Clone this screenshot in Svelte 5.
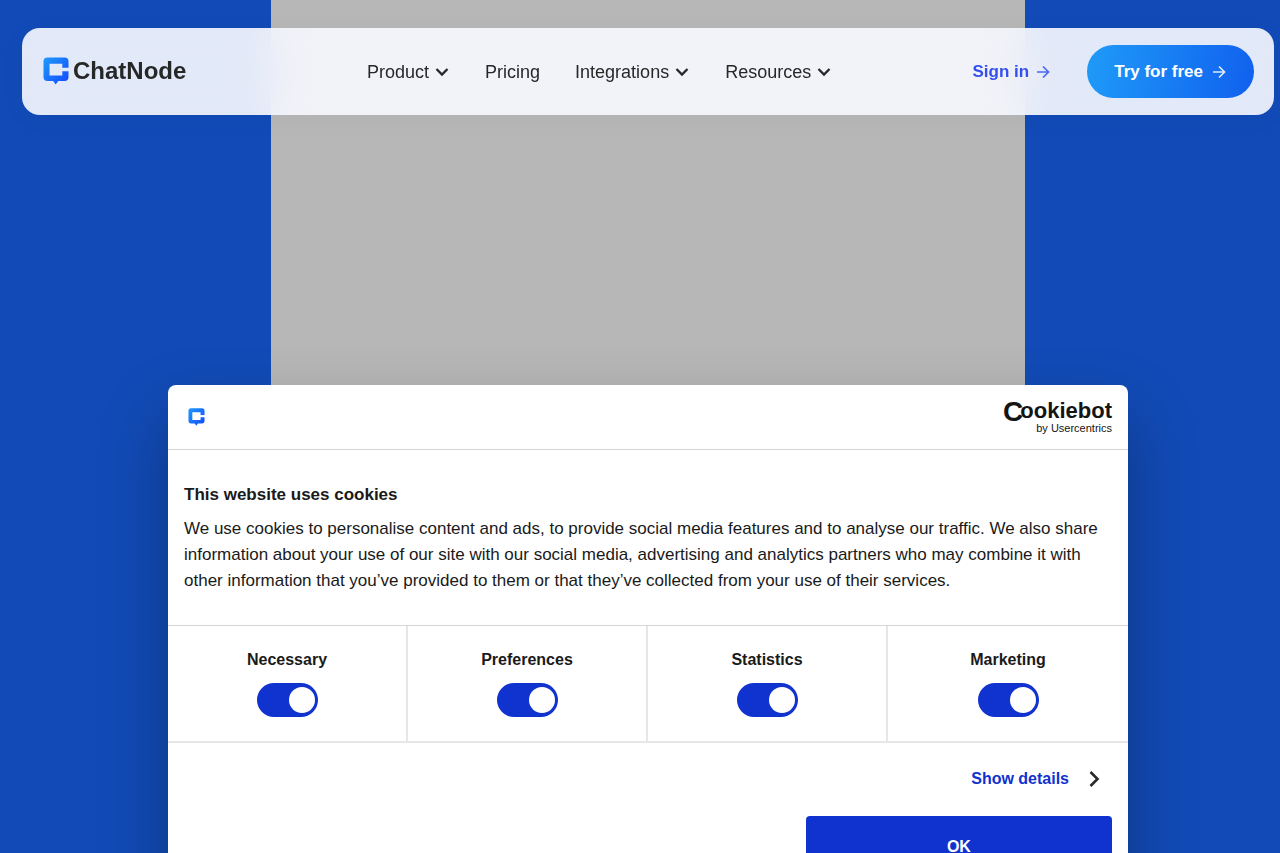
<script lang="ts">
  /**
   * Landing page header with the cookie consent dialog
   */

  interface NavItem {
    label: string;
    menu: boolean;
  }

  interface Category {
    id: string;
    label: string;
    enabled: boolean;
  }

  const navItems: NavItem[] = [
    { label: 'Product', menu: true },
    { label: 'Pricing', menu: false },
    { label: 'Integrations', menu: true },
    { label: 'Resources', menu: true }
  ];

  let categories: Category[] = $state([
    { id: 'necessary', label: 'Necessary', enabled: true },
    { id: 'preferences', label: 'Preferences', enabled: true },
    { id: 'statistics', label: 'Statistics', enabled: true },
    { id: 'marketing', label: 'Marketing', enabled: true }
  ]);
</script>

{#snippet mark(id: string)}
  <svg class="mark" viewBox="0 0 26 28" aria-hidden="true">
    <defs>
      <linearGradient id={id} x1="0" y1="0" x2="1" y2="1">
        <stop offset="0" stop-color="#1f9bfb" />
        <stop offset="1" stop-color="#1248fb" />
      </linearGradient>
    </defs>
    <path
      fill="url(#{id})"
      d="M4.500 0.500H21.500Q25.500 0.500 25.500 4.500V10.800H19.300V6.800H6.500V18.500H19.300V14.200H25.500V20Q25.500 24 21.500 24H15.200L12.700 27.500L10.200 24H4.500Q0.500 24 0.500 20V4.500Q0.500 0.500 4.500 0.500Z"
    />
  </svg>
{/snippet}

{#snippet arrow()}
  <svg class="icon" viewBox="0 0 16 16" aria-hidden="true">
    <path d="M2 8H13.500M8 2.500L13.500 8L8 13.500" stroke-width="1.700" opacity="0.85" />
  </svg>
{/snippet}

<div class="page">
  <div class="video"></div>

  <header class="header">
    <a class="logo" href="#home">
      {@render mark('header-mark')}
      <span>ChatNode</span>
    </a>

    <nav class="nav">
      {#each navItems as item}
        {#if item.menu}
          <button class="nav-item" type="button">
            {item.label}
            <svg class="icon" viewBox="0 0 16 16" aria-hidden="true">
              <path d="M2.500 5L8 10.500L13.500 5" stroke-width="2.300" />
            </svg>
          </button>
        {:else}
          <a class="nav-item" href="#pricing">{item.label}</a>
        {/if}
      {/each}
    </nav>

    <div class="actions">
      <a class="sign-in" href="#login">Sign in {@render arrow()}</a>
      <a class="try" href="#signup">Try for free {@render arrow()}</a>
    </div>
  </header>

  <div class="dialog" role="dialog" aria-labelledby="consent-title">
    <div class="dialog-header">
      {@render mark('dialog-mark')}
      <a class="cookiebot" href="#cookiebot">
        <span class="cookiebot-name"><span class="cookiebot-c">C</span>ookiebot</span>
        <span class="cookiebot-by">by Usercentrics</span>
      </a>
    </div>

    <div class="dialog-body">
      <h2 id="consent-title">This website uses cookies</h2>
      <p>
        We use cookies to personalise content and ads, to provide social media features and to
        analyse our traffic. We also share information about your use of our site with our social
        media, advertising and analytics partners who may combine it with other information that
        you’ve provided to them or that they’ve collected from your use of their services.
      </p>
    </div>

    <div class="categories">
      {#each categories as category}
        <div class="category">
          <label for={category.id}>{category.label}</label>
          <input id={category.id} type="checkbox" bind:checked={category.enabled} />
        </div>
      {/each}
    </div>

    <div class="dialog-footer">
      <a class="details" href="#details">
        Show details
        <svg class="icon" viewBox="0 0 16 16" aria-hidden="true">
          <path d="M4.500 1L11.500 8L4.500 15" stroke="#2a2a2a" stroke-width="2.600" />
        </svg>
      </a>
      <button class="ok" type="button">OK</button>
    </div>
  </div>
</div>

<style>
  :global(body) {
    margin: 0;
    background: #124bb7;
  }

  .page {
    position: relative;
    box-sizing: border-box;
    height: 100vh;
    padding: 28px 6px 0 22px;
    overflow: hidden;
    font-family: 'Liberation Sans', Arial, sans-serif;
    background: #124bb7;
  }

  .page a {
    text-decoration: none;
  }

  .page button {
    padding: 0;
    border: none;
    background: none;
    font-family: inherit;
    cursor: pointer;
  }

  .icon {
    flex: none;
    width: 16px;
    height: 16px;
    fill: none;
    stroke: currentColor;
  }

  /* Backdrop */
  .video {
    position: absolute;
    inset: 0 0 0 16px;
    max-width: 754px;
    margin: 0 auto;
    background: #b7b7b7;
  }

  /* Header */
  .header {
    position: relative;
    display: grid;
    grid-template-columns: 324px 1fr auto;
    align-items: center;
    box-sizing: border-box;
    padding: 17px 20px 17px 21px;
    border-radius: 18px;
    background: rgba(247, 248, 254, 0.91);
    backdrop-filter: blur(20px);
    box-shadow: 0 4px 30px rgba(0, 0, 0, 0.03);
  }

  .logo {
    display: flex;
    align-items: center;
    gap: 4px;
    padding-bottom: 2px;
    color: #262828;
    font-size: 24px;
    line-height: 28px;
    font-weight: 700;
  }

  .logo .mark {
    width: 26px;
    height: 28px;
  }

  .nav {
    display: flex;
    align-items: center;
    gap: 35px;
  }

  .page .nav-item {
    display: flex;
    align-items: center;
    gap: 5px;
    color: #262828;
    font-size: 18px;
    line-height: 24px;
  }

  .actions {
    display: flex;
    align-items: center;
    gap: 36px;
    font-size: 17px;
    line-height: 24px;
    font-weight: 700;
    white-space: nowrap;
  }

  .sign-in {
    display: flex;
    align-items: center;
    gap: 6px;
    color: #3350ee;
  }

  .try {
    display: flex;
    align-items: center;
    gap: 8px;
    box-sizing: border-box;
    height: 53px;
    padding: 0 27px;
    border-radius: 27px;
    color: #fff;
    background: linear-gradient(100deg, #1f9bf8, #1060ee);
  }

  /* Consent dialog */
  .dialog {
    position: absolute;
    top: 385px;
    left: 16px;
    right: 0;
    max-width: 960px;
    margin: 0 auto;
    border-radius: 8px;
    color: #1a1a1a;
    background: #fff;
    box-shadow: 0 32px 68px rgba(0, 0, 0, 0.3);
    font-size: 16px;
    line-height: 26px;
  }

  .dialog-header {
    display: flex;
    align-items: center;
    justify-content: space-between;
    box-sizing: border-box;
    height: 65px;
    padding: 0 16px 0 20px;
    border-bottom: 1px solid #d6d6d6;
  }

  .dialog-header .mark {
    width: 17px;
    height: 18px;
  }

  .cookiebot {
    display: flex;
    flex-direction: column;
    align-items: flex-end;
    color: #141414;
  }

  .cookiebot-name {
    font-size: 22px;
    line-height: 20px;
    font-weight: 700;
  }

  .cookiebot-c {
    margin-right: -3px;
    font-size: 28px;
    line-height: 20px;
    vertical-align: -3px;
  }

  .cookiebot-by {
    font-size: 11px;
    line-height: 12px;
  }

  .dialog-body {
    padding: 32px 16px 31px;
    font-size: 17px;
  }

  h2 {
    margin: 0 0 8px;
    font-size: inherit;
    font-weight: 700;
  }

  p {
    margin: 0;
  }

  .categories {
    display: grid;
    grid-template-columns: repeat(4, 1fr);
    border-top: 1px solid #d6d6d6;
    border-bottom: 2px solid #e6e6e6;
  }

  .category {
    display: flex;
    flex-direction: column;
    align-items: center;
    gap: 10px;
    padding: 21px 0 24px;
    font-weight: 700;
  }

  .category:not(:last-child) {
    border-right: 2px solid #e6e6e6;
  }

  .category input {
    appearance: none;
    display: flex;
    justify-content: flex-end;
    align-items: center;
    box-sizing: border-box;
    width: 61px;
    height: 34px;
    margin: 0;
    padding: 0 3px;
    border-radius: 17px;
    background: #1032cf;
    cursor: pointer;
  }

  .category input:not(:checked) {
    justify-content: flex-start;
    background: #d6d6d6;
  }

  .category input::before {
    content: '';
    width: 26px;
    height: 26px;
    border-radius: 50%;
    background: #fff;
  }

  .dialog-footer {
    display: flex;
    flex-direction: column;
    align-items: flex-end;
    gap: 24px;
    padding: 23px 16px;
  }

  .details {
    display: flex;
    align-items: center;
    gap: 17px;
    padding-right: 10px;
    color: #1032cf;
    font-weight: 700;
  }

  .page .ok {
    width: 33%;
    height: 62px;
    border-radius: 4px;
    color: #fff;
    background: #1032cf;
    font-size: 16px;
    font-weight: 700;
  }
</style>
